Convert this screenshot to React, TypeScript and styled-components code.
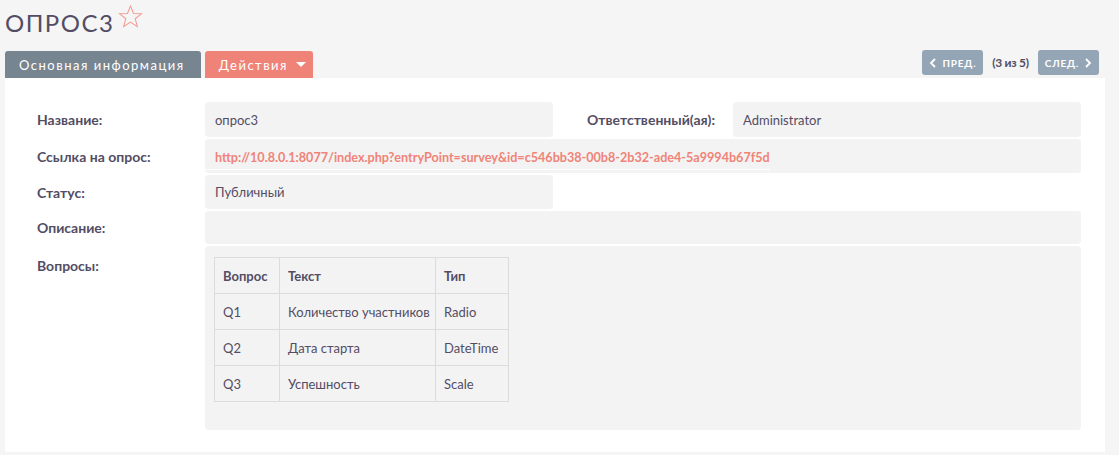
import React from "react";
import styled, { createGlobalStyle } from "styled-components";

const Global = createGlobalStyle`
  html, body { margin: 0; padding: 0; background: #f5f5f5; }
  body { font-family: Lato, "Open Sans", "Liberation Sans", sans-serif; color: #534d64; }
  * { box-sizing: border-box; }
`;

const Page = styled.div`
  width: 1119px;
  height: 455px;
  overflow: hidden;
  background: #f5f5f5;
`;

const TitleRow = styled.div`
  display: flex;
  align-items: flex-start;
  padding: 5px 5px 0 5px;
  height: 50px;
`;

const Title = styled.h2`
  margin: 0;
  font-size: 24px;
  font-weight: 400;
  letter-spacing: 1.5px;
  line-height: 36px;
  color: #534d64;
  text-transform: uppercase;
`;

const Star = styled.svg`
  width: 25px;
  height: 25px;
  margin-left: 4px;
  margin-top: -1px;
`;

const TabBar = styled.div`
  display: flex;
  justify-content: space-between;
  align-items: flex-start;
  padding: 0 20px 0 5px;
`;

const Tabs = styled.div`
  display: flex;
  gap: 4px;
  margin-top: 1px;
`;

const Tab = styled.div<{ $variant: "main" | "action" }>`
  height: 27px;
  display: flex;
  align-items: center;
  gap: 8px;
  padding: ${(p) => (p.$variant === "main" ? "0 16px 0 14px" : "0 7px 0 14px")};
  background: ${(p) => (p.$variant === "main" ? "#778591" : "#f08377")};
  color: #fff;
  font-size: 13px;
  letter-spacing: 1.5px;
  border-radius: 3px 3px 0 0;
`;

const Caret = styled.span`
  width: 0;
  height: 0;
  border-left: 5px solid transparent;
  border-right: 5px solid transparent;
  border-top: 5px solid #fff;
`;

const Pager = styled.div`
  display: flex;
  align-items: center;
  gap: 9px;
`;

const PagerButton = styled.div`
  height: 25px;
  display: flex;
  align-items: center;
  gap: 5px;
  padding: 0 7px;
  background: #94a5b6;
  color: #fff;
  font-size: 10px;
  font-weight: 700;
  letter-spacing: 0.8px;
  border-radius: 3px;
`;

const PagerCount = styled.span`
  font-size: 12px;
  font-weight: 700;
  color: #534d64;
  letter-spacing: -0.3px;
`;

const Panel = styled.div`
  margin: 0 14px 0 5px;
  background: #fff;
  padding: 24px 24px 22px 32px;
  display: flex;
  flex-direction: column;
  gap: 2px;
  height: 374px;
`;

const Row = styled.div<{ $h?: number }>`
  display: flex;
  min-height: ${(p) => p.$h ?? 34}px;
`;

const Label = styled.div<{ $w: number; $top?: boolean }>`
  width: ${(p) => p.$w}px;
  flex: none;
  display: flex;
  align-items: ${(p) => (p.$top ? "flex-start" : "center")};
  padding-top: ${(p) => (p.$top ? "11px" : "0")};
  font-size: 14px;
  font-weight: 700;
  color: #534d64;
`;

const Value = styled.div<{ $w?: number; $top?: boolean }>`
  ${(p) => (p.$w ? `width: ${p.$w}px; flex: none;` : "flex: 1;")}
  background: #f3f3f3;
  border-radius: 4px;
  display: flex;
  align-items: ${(p) => (p.$top ? "flex-start" : "center")};
  padding: ${(p) => (p.$top ? "11px 9px 29px" : "0 10px")};
  font-size: 13px;
  color: #534d64;
`;

const Spacer = styled.div<{ $w: number }>`
  width: ${(p) => p.$w}px;
  flex: none;
`;

const Link = styled.a`
  color: #f08377;
  font-weight: 700;
  font-size: 12.6px;
  text-decoration: none;
  padding-bottom: 4px;
  margin-top: 7px;
  margin-left: -10px;
  padding-left: 10px;
  border-bottom: 1px solid #fff;
`;

const Table = styled.table`
  border-collapse: collapse;
  table-layout: fixed;
  width: 294px;
  font-size: 13px;
  color: #534d64;
`;

const Th = styled.th<{ $w: number }>`
  width: ${(p) => p.$w}px;
  height: 36px;
  text-align: left;
  font-weight: 700;
  padding: 0 0 0 8px;
  border: 1px solid #dcdcdc;
`;

const Td = styled.td`
  height: 36px;
  padding: 0 0 0 8px;
  border: 1px solid #dcdcdc;
  white-space: nowrap;
  overflow: visible;
`;

const questions = [
  { q: "Q1", text: "Количество участников", type: "Radio" },
  { q: "Q2", text: "Дата старта", type: "DateTime" },
  { q: "Q3", text: "Успешность", type: "Scale" },
];

export default function App() {
  return (
    <Page>
      <Global />
      <TitleRow>
        <Title>опрос3</Title>
        <Star viewBox="0 0 24 24">
          <path
            d="M12 1.8l2.9 7.3 7.6.3-6 4.8 2.1 7.5L12 17.4l-6.6 4.3 2.1-7.5-6-4.8 7.6-.3z"
            fill="none"
            stroke="#f29a91"
            strokeWidth="1"
            strokeLinejoin="miter"
          />
        </Star>
      </TitleRow>
      <TabBar>
        <Tabs>
          <Tab $variant="main">Основная информация</Tab>
          <Tab $variant="action">
            Действия
            <Caret />
          </Tab>
        </Tabs>
        <Pager>
          <PagerButton>
            <svg width="8" height="10" viewBox="0 0 8 10">
              <path d="M6 1L2 5l4 4" fill="none" stroke="#fff" strokeWidth="1.8" />
            </svg>
            ПРЕД.
          </PagerButton>
          <PagerCount>(3 из 5)</PagerCount>
          <PagerButton>
            СЛЕД.
            <svg width="8" height="10" viewBox="0 0 8 10">
              <path d="M2 1l4 4-4 4" fill="none" stroke="#fff" strokeWidth="1.8" />
            </svg>
          </PagerButton>
        </Pager>
      </TabBar>
      <Panel>
        <Row $h={35}>
          <Label $w={168}>Название:</Label>
          <Value $w={348}>опрос3</Value>
          <Spacer $w={34} />
          <Label $w={146}>Ответственный(ая):</Label>
          <Value $w={348}>Administrator</Value>
        </Row>
        <Row $h={34}>
          <Label $w={168}>Ссылка на опрос:</Label>
          <Value>
            <Link href="#">
              http://10.8.0.1:8077/index.php?entryPoint=survey&amp;id=c546bb38-00b8-2b32-ade4-5a9994b67f5d
            </Link>
          </Value>
        </Row>
        <Row $h={34}>
          <Label $w={168}>Статус:</Label>
          <Value $w={348}>Публичный</Value>
        </Row>
        <Row $h={33}>
          <Label $w={168}>Описание:</Label>
          <Value />
        </Row>
        <Row>
          <Label $w={168} $top>
            Вопросы:
          </Label>
          <Value $top>
            <Table>
              <thead>
                <tr>
                  <Th $w={65}>Вопрос</Th>
                  <Th $w={156}>Текст</Th>
                  <Th $w={73}>Тип</Th>
                </tr>
              </thead>
              <tbody>
                {questions.map((r) => (
                  <tr key={r.q}>
                    <Td>{r.q}</Td>
                    <Td>{r.text}</Td>
                    <Td>{r.type}</Td>
                  </tr>
                ))}
              </tbody>
            </Table>
          </Value>
        </Row>
      </Panel>
    </Page>
  );
}
